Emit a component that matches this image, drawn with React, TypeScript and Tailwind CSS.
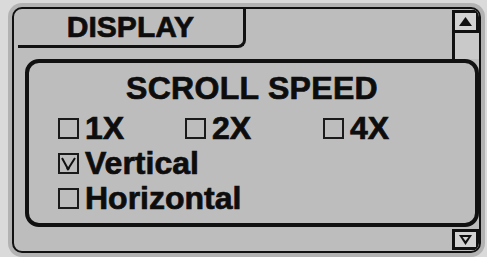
import React from "react";

function Box({ checked = false }: { checked?: boolean }) {
  return (
    <div className="w-[21px] h-[21px] border-2 border-[#1a1a1a] shrink-0 flex items-center justify-center">
      {checked && (
        <svg width="17" height="17" viewBox="0 0 17 17">
          <polyline points="2,3 8,14 15,3" fill="none" stroke="#111" strokeWidth="2" />
          <circle cx="8" cy="13.5" r="1.6" fill="#111" />
        </svg>
      )}
    </div>
  );
}

function Option({ label, checked, className = "" }: { label: string; checked?: boolean; className?: string }) {
  return (
    <div className={"flex items-center gap-[6px] h-[35px] " + className}>
      <Box checked={checked} />
      <span>{label}</span>
    </div>
  );
}

export default function App() {
  return (
    <div
      className="w-[487px] h-[257px] bg-[#dadada] pl-[12px] pt-[7px] text-[#0d0d0d] font-bold text-[32px] leading-[35px] [-webkit-text-stroke:0.7px_#0d0d0d]"
      style={{ fontFamily: '"Liberation Sans", Arial, sans-serif' }}
    >
      <div className="w-[469px] h-[246px] border-2 border-[#111] rounded-[10px] bg-[#bdbdbd] shadow-[0_0_0_4px_#b3b3b3] flex flex-col overflow-hidden">
        {/* top row: tab + scroll up */}
        <div className="h-[50px] flex shrink-0">
          <div className="ml-[4px] w-[228px] h-[39px] border-b-[3px] border-r-[3px] border-[#111] rounded-br-[8px] text-center text-[30px] leading-[36px]">
            DISPLAY
          </div>
          <div className="flex-1" />
          <div className="w-[27px] flex flex-col pt-[1px]">
            <div className="h-[23px] border-[3px] border-[#111] bg-[#d2d2d2] flex items-center justify-center">
              <svg width="13" height="9" viewBox="0 0 13 9">
                <polygon points="6.5,0 13,9 0,9" fill="#111" />
              </svg>
            </div>
            <div className="flex-1 border-l-[3px] border-[#111] bg-[#c9c9c9]" />
          </div>
        </div>

        {/* scroll speed group */}
        <div className="ml-[11px] h-[168px] border-4 border-[#111] rounded-[14px] pt-[8px] pl-[29px] pb-[7px] flex flex-col">
          <div className="text-center tracking-[0.3px] pr-[29px] h-[35px]">SCROLL SPEED</div>
          <div className="mt-[5px] flex">
            <Option label="1X" className="w-[127px]" />
            <Option label="2X" className="w-[138px]" />
            <Option label="4X" />
          </div>
          <Option label="Vertical" checked />
          <Option label="Horizontal" />
        </div>

        {/* bottom row: scroll down */}
        <div className="flex-1 flex justify-end pt-[2px]">
          <div className="w-[27px] h-[21px] border-[3px] border-[#111] bg-[#d2d2d2] flex items-center justify-center">
            <svg width="13" height="10" viewBox="0 0 13 10">
              <polygon points="0,0 13,0 6.5,10" fill="#111" />
              <polygon points="3.5,2 9.5,2 6.5,6" fill="#d2d2d2" />
            </svg>
          </div>
        </div>
      </div>
    </div>
  );
}
